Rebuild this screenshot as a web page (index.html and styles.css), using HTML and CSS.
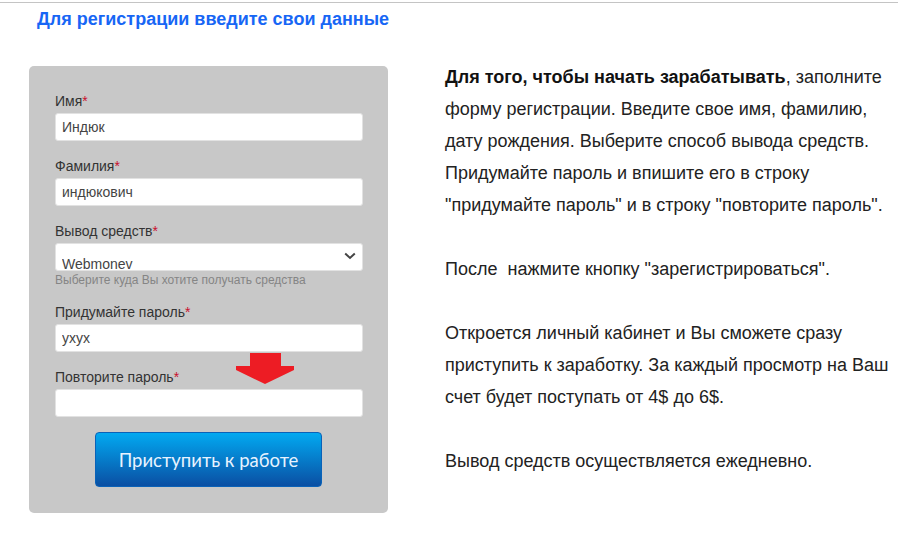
FILE: index.html
```html
<!DOCTYPE html>
<html lang="ru">
<head>
<meta charset="utf-8">
<title>Регистрация</title>
<link rel="stylesheet" href="styles.css">
</head>
<body>
<div class="topline"></div>
<h1 class="title">Для регистрации введите свои данные</h1>
<div class="row">
  <form class="panel">
    <label class="lbl">Имя<span class="req">*</span></label>
    <input class="field" type="text" value="Индюк">
    <label class="lbl">Фамилия<span class="req">*</span></label>
    <input class="field" type="text" value="индюкович">
    <label class="lbl">Вывод средств<span class="req">*</span></label>
    <div class="select-wrap">
      <select class="field select"><option>Webmonev</option></select>
      <svg class="chev" width="12" height="8" viewBox="0 0 12 8"><path d="M1.2 1.5 L6 6 L10.8 1.5" fill="none" stroke="#444" stroke-width="2"/></svg>
    </div>
    <div class="help">Выберите куда Вы хотите получать средства</div>
    <label class="lbl">Придумайте пароль<span class="req">*</span></label>
    <input class="field" type="text" value="yxyx">
    <div class="arrow-anchor">
      <label class="lbl">Повторите пароль<span class="req">*</span></label>
      <svg class="arrow" width="60" height="33" viewBox="0 0 60 33"><polygon points="14,0 45,0 45,13 58,13 58,17 29,31 0,17 0,13 14,13" fill="#ed1c24"/></svg>
    </div>
    <input class="field" type="text" value="">
    <div class="btn-row"><button type="button" class="btn">Приступить к работе</button></div>
  </form>
  <div class="info">
    <p><b>Для того, чтобы начать зарабатывать</b>, заполните форму регистрации. Введите свое имя, фамилию, дату рождения. Выберите способ вывода средств. Придумайте пароль и впишите его в строку "придумайте пароль" и в строку "повторите пароль".</p>
    <p>После&nbsp; нажмите кнопку "зарегистрироваться".</p>
    <p>Откроется личный кабинет и Вы сможете сразу приступить к заработку. За каждый просмотр на Ваш счет будет поступать от 4$ до 6$.</p>
    <p>Вывод средств осуществляется ежедневно.</p>
  </div>
</div>
</body>
</html>
```
FILE: styles.css
```css
* { box-sizing: border-box; }
html, body { margin: 0; padding: 0; background: #fff; }
body { font-family: "Liberation Sans", Arial, sans-serif; overflow: hidden; }

.topline { height: 1px; margin-top: 2px; background: #c4c4c4; }

.title {
  margin: 6px 0 0 37px;
  font-size: 18px;
  line-height: 20px;
  font-weight: bold;
  color: #1766f5;
}

.row { display: flex; align-items: flex-start; margin-top: 32px; }

.panel {
  margin: 5px 0 0 29px;
  width: 359px;
  background: #c8c8c8;
  border-radius: 5px;
  padding: 27px 25px 26px 26px;
  display: flex;
  flex-direction: column;
}

.lbl {
  display: block;
  font-size: 14px;
  line-height: 16px;
  color: #333;
  margin: 17px 0 4px;
}
.panel > .lbl:first-child { margin-top: 0; }
.req { color: #c8102e; }

.field {
  display: block;
  width: 308px;
  height: 28px;
  border: 1px solid #e2e2e2;
  border-radius: 3px;
  background: #fff;
  padding: 0 6px;
  font-family: "Liberation Sans", Arial, sans-serif;
  font-size: 14px;
  font-weight: normal;
  color: #444;
  outline: none;
}

.select-wrap { position: relative; width: 308px; }
.select {
  -webkit-appearance: none;
  appearance: none;
  padding-top: 12px;
  padding-bottom: 0;
  line-height: 16px;
  color: #444;
}
.chev { position: absolute; right: 7px; top: 9px; }

.help {
  margin-top: 3px;
  font-size: 12px;
  line-height: 13px;
  color: #858585;
}

.arrow-anchor { position: relative; }
.arrow { position: absolute; left: 181px; top: 1px; }

.btn-row { display: flex; margin-top: 15px; padding-left: 40px; }
.btn {
  width: 227px;
  height: 55px;
  border: 1px solid #0a62b8;
  border-radius: 4px;
  background: linear-gradient(#02a9f1, #0a4fa3);
  color: #e8f3ff;
  font-family: Lato, "Liberation Sans", sans-serif;
  font-size: 18.5px;
  padding: 0;
}

.info {
  margin-left: 57px;
  width: 452px;
  font-size: 18px;
  line-height: 32px;
  color: #222;
}
.info p { margin: 0 0 32px; }
.info b { color: #111; }
```
